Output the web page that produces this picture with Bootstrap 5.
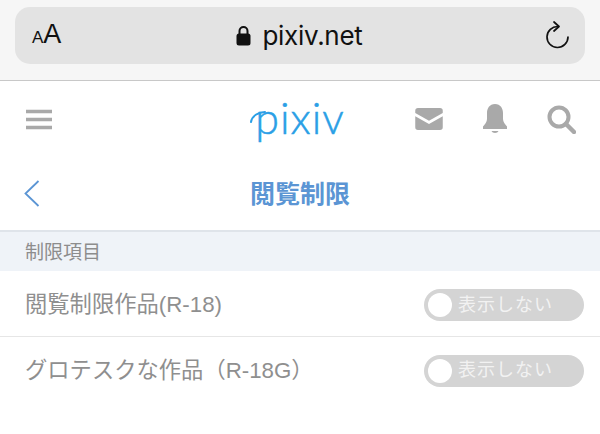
<!DOCTYPE html>
<html lang="ja">
<head>
    <meta charset="UTF-8">
    <title>閲覧制限</title>
    <link href="https://cdn.jsdelivr.net/npm/bootstrap@5.3.0/dist/css/bootstrap.min.css" rel="stylesheet">
    <style>
        html, body { height: 434px; overflow: hidden; }
        body { background: #fff; font-family: "Liberation Sans", "Noto Sans CJK JP", sans-serif; }
        .safari-bar { height: 81px; background: #f6f6f6; border-bottom: 1px solid #c8c8c8; padding: 7px 15px 0; }
        .url-pill { height: 57px; background: #e3e3e3; border-radius: 15px; padding: 0 15px 0 17px; color: #111; }
        .aa-small { font-size: 17px; }
        .aa-big { font-size: 27px; line-height: 1; }
        .url-text { font-family: "Inter", "Liberation Sans", sans-serif; font-size: 26px; letter-spacing: -.3px; }
        .url-mid { left: 0; right: 0; top: 0; bottom: 0; gap: 12px; padding-right: 2px; }
        .site-head { height: 76px; padding: 0 24px 0 26px; }
        .logo-word { font-family: "Lato", sans-serif; font-weight: 300; font-size: 43px; line-height: 1; color: #2a9fe6; letter-spacing: 1px; -webkit-text-stroke: .5px #2a9fe6; top: -2px; }
        .logo-swoosh { left: -5px; top: 15px; }
        .logo-wrap { left: 0; right: 0; top: 0; bottom: 0; padding-left: 0; }
        .head-icons { gap: 39px; }
        .title-row { height: 75px; border-bottom: 2px solid #dfe4ea; padding-left: 24px; }
        .title-text { left: 0; right: 0; top: 0; bottom: 0; color: #5b95d4; font-size: 25px; font-weight: 700; padding-top: 3px; }
        .section-label { height: 39px; background: #eff3f8; color: #8d8d8d; font-size: 19px; padding: 3px 0 0 25px; }
        .limit-row { height: 65px; padding: 3px 16px 0 25px; color: #8f8f8f; font-size: 22.3px; }
        .limit-row + .limit-row { border-top: 1px solid #e6e6e6; }
        .limit-toggle { width: 160px; height: 32px; border-radius: 16px; background: #d4d4d4; color: #f2f2f2; font-size: 18px; padding: 0 4px; gap: 6px; letter-spacing: 1px; }
        .limit-knob { width: 24px; height: 24px; border-radius: 50%; background: #fff; }
    </style>
</head>
<body>
    <!-- browser chrome -->
    <div class="safari-bar">
        <div class="url-pill d-flex align-items-center justify-content-between position-relative">
            <div class="d-flex align-items-baseline"><span class="aa-small">A</span><span class="aa-big">A</span></div>
            <div class="url-mid position-absolute d-flex align-items-center justify-content-center">
                <svg width="15" height="21" viewBox="0 0 15 21"><path d="M3.500 10V6a4 4 0 0 1 8 0v4" fill="none" stroke="#111" stroke-width="2"/><rect x="0.500" y="8.500" width="14" height="12" rx="2.500" fill="#111"/></svg>
                <span class="url-text">pixiv.net</span>
            </div>
            <svg width="26" height="30" viewBox="0 0 26 30" class="position-relative"><path d="M14 5.500A10.500 10.500 0 1 0 24 16" fill="none" stroke="#111" stroke-width="1.700" stroke-linecap="round"/><path d="M10 1l5 4.500-5 4.500" fill="none" stroke="#111" stroke-width="1.700" stroke-linecap="round" stroke-linejoin="round"/></svg>
        </div>
    </div>

    <!-- site header -->
    <div class="site-head d-flex align-items-center justify-content-between position-relative">
        <svg width="26" height="21" viewBox="0 0 26 21"><path d="M0 2.500h26M0 10.500h26M0 18.500h26" stroke="#a9a9a9" stroke-width="3.400"/></svg>
        <div class="logo-wrap position-absolute d-flex align-items-center justify-content-center">
            <span class="logo-word position-relative">pixiv<svg class="logo-swoosh position-absolute" width="16" height="12" viewBox="0 0 16 12"><path d="M1 11C2 5 8 1 15 1" fill="none" stroke="#2a9fe6" stroke-width="2" stroke-linecap="round"/></svg></span>
        </div>
        <div class="head-icons d-flex align-items-center position-relative">
            <svg width="28" height="22" viewBox="0 0 30 24"><path d="M3 0h24a3 3 0 0 1 3 3v2.500L15 14 0 5.500V3a3 3 0 0 1 3-3z" fill="#a9a9a9"/><path d="M0 9l15 8.500L30 9v12a3 3 0 0 1-3 3H3a3 3 0 0 1-3-3z" fill="#a9a9a9"/></svg>
            <svg width="26" height="30" viewBox="0 0 26 30"><path d="M13 0c5.500 0 8 4.500 8 9v6c0 3 2 5 4 7.500V25H1v-2.500C3 20 5 18 5 15V9c0-4.500 2.500-9 8-9z" fill="#a9a9a9"/><path d="M9.500 27h7c-1 2.500-6 2.500-7 0z" fill="#a9a9a9"/></svg>
            <svg width="29" height="29" viewBox="0 0 29 29"><circle cx="12" cy="12" r="9.500" fill="none" stroke="#a9a9a9" stroke-width="4"/><path d="M19 19l8 8" stroke="#a9a9a9" stroke-width="4.500" stroke-linecap="round"/></svg>
        </div>
    </div>

    <!-- page title -->
    <div class="title-row d-flex align-items-center position-relative">
        <svg width="16" height="27" viewBox="0 0 16 27"><path d="M14.500 1L1.500 13.500l13 12.500" fill="none" stroke="#5b95d4" stroke-width="1.800"/></svg>
        <div class="title-text position-absolute d-flex align-items-center justify-content-center">閲覧制限</div>
    </div>

    <div class="section-label d-flex align-items-center">制限項目</div>

    <div class="limit-row d-flex align-items-center justify-content-between">
        <span>閲覧制限作品(R-18)</span>
        <div class="limit-toggle d-flex align-items-center"><span class="limit-knob"></span><span>表示しない</span></div>
    </div>
    <div class="limit-row d-flex align-items-center justify-content-between">
        <span>グロテスクな作品（R-18G）</span>
        <div class="limit-toggle d-flex align-items-center"><span class="limit-knob"></span><span>表示しない</span></div>
    </div>

    <script src="https://cdn.jsdelivr.net/npm/bootstrap@5.3.0/dist/js/bootstrap.bundle.min.js"></script>
</body>
</html>
